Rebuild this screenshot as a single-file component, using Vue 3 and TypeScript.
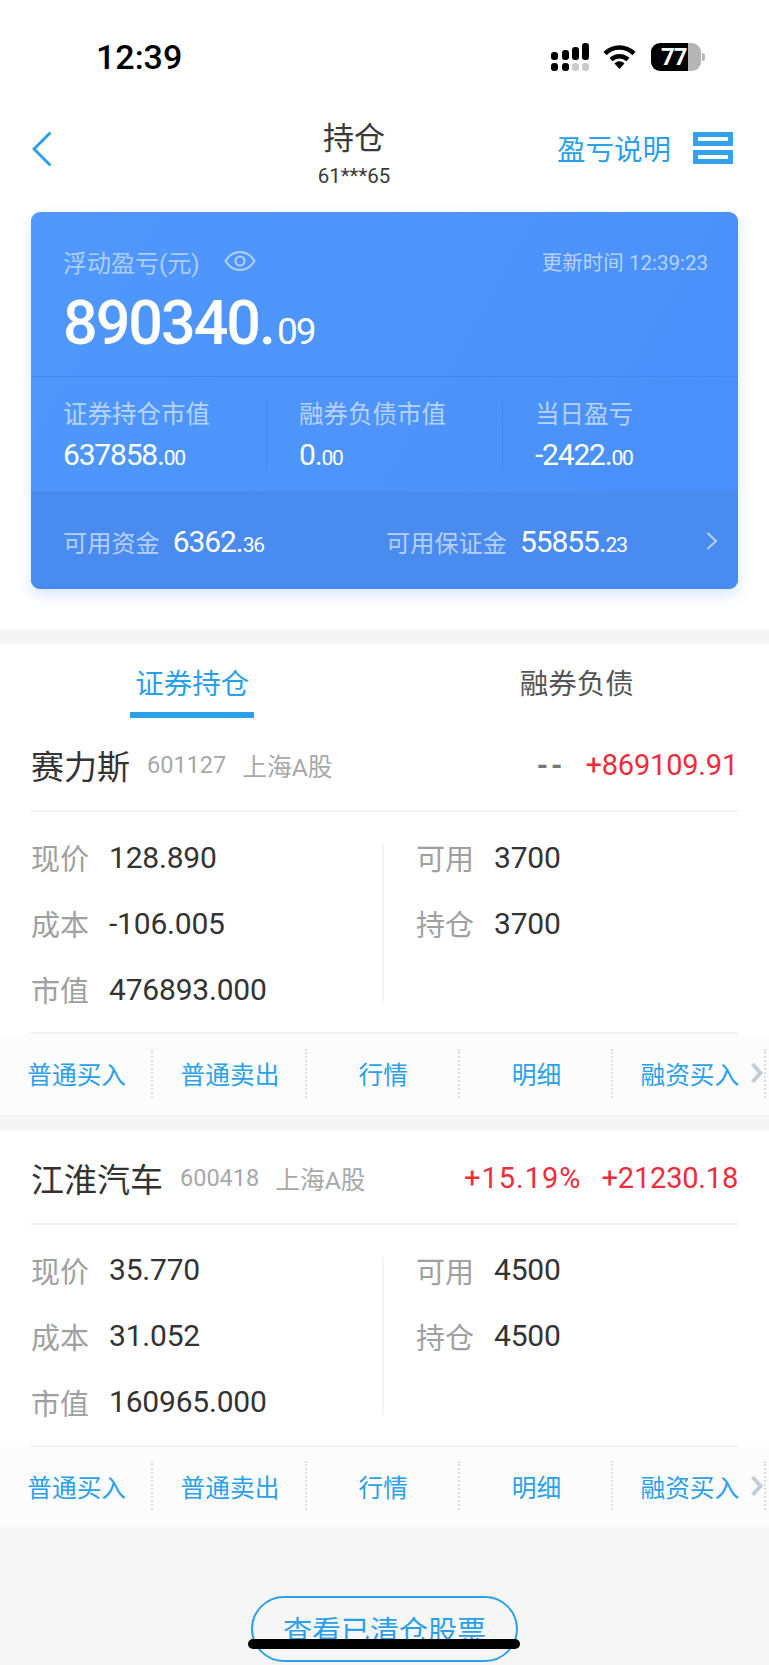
<script setup lang="ts">
interface Stock {
  name: string
  code: string
  market: string
  rate: string
  profit: string
  left: { label: string; value: string }[]
  right: { label: string; value: string }[]
}

const summary = [
  { label: '证券持仓市值', whole: '637858.', dec: '00' },
  { label: '融券负债市值', whole: '0.', dec: '00' },
  { label: '当日盈亏', whole: '-2422.', dec: '00' },
]

const actions = ['普通买入', '普通卖出', '行情', '明细', '融资买入']

const stocks: Stock[] = [
  {
    name: '赛力斯',
    code: '601127',
    market: '上海A股',
    rate: '--',
    profit: '+869109.91',
    left: [
      { label: '现价', value: '128.890' },
      { label: '成本', value: '-106.005' },
      { label: '市值', value: '476893.000' },
    ],
    right: [
      { label: '可用', value: '3700' },
      { label: '持仓', value: '3700' },
    ],
  },
  {
    name: '江淮汽车',
    code: '600418',
    market: '上海A股',
    rate: '+15.19%',
    profit: '+21230.18',
    left: [
      { label: '现价', value: '35.770' },
      { label: '成本', value: '31.052' },
      { label: '市值', value: '160965.000' },
    ],
    right: [
      { label: '可用', value: '4500' },
      { label: '持仓', value: '4500' },
    ],
  },
]
</script>

<template>
  <div class="page">
    <div class="status">
      <span class="status__time">12:39</span>
      <svg class="status__signal" width="38" height="28" viewBox="0 0 38 28">
        <rect x="0" y="9" width="7" height="8" rx="3" fill="#000" />
        <rect x="11" y="7" width="7" height="10" rx="3" fill="#000" />
        <rect x="21" y="4" width="7" height="13" rx="3" fill="#000" />
        <rect x="31" y="0" width="7" height="17" rx="3" fill="#000" />
        <rect x="0" y="20" width="7" height="8" rx="3" fill="#000" />
        <rect x="11" y="20" width="7" height="8" rx="3" fill="#000" />
        <rect x="21" y="20" width="7" height="8" rx="3" fill="#ccc" />
        <rect x="31" y="20" width="7" height="8" rx="3" fill="#ccc" />
      </svg>
      <svg class="status__wifi" width="33" height="24" viewBox="0 0 33 24">
        <path d="M2 8.500C10.500 .500 22.500 .500 31 8.500" fill="none" stroke="#000" stroke-width="4.500" />
        <path d="M8 14.500C13 10 20 10 25 14.500" fill="none" stroke="#000" stroke-width="4.500" />
        <path d="M11.500 18.500C14.500 15.500 18.500 15.500 21.500 18.500L16.500 24Z" fill="#000" />
      </svg>
      <div class="status__battery">
        <span class="status__level">77</span>
      </div>
      <span class="status__cap" />
    </div>

    <header class="nav">
      <svg class="nav__back" width="20" height="36" viewBox="0 0 20 36">
        <path d="M18.500 1.500L2 18L18.500 34.500" fill="none" stroke="#2ba0ea" stroke-width="3" />
      </svg>
      <div class="nav__title">
        <h1>持仓</h1>
        <p>61***65</p>
      </div>
      <div class="nav__right">
        <span class="nav__link">盈亏说明</span>
        <svg width="40" height="32" viewBox="0 0 40 32">
          <rect x="2.500" y="2.500" width="35" height="9" fill="none" stroke="#33a2ea" stroke-width="5" />
          <rect x="2.500" y="20.500" width="35" height="9" fill="none" stroke="#33a2ea" stroke-width="5" />
        </svg>
      </div>
    </header>

    <section class="card">
      <div class="card__top">
        <div class="card__head">
          <span class="card__label">浮动盈亏(元)</span>
          <svg class="card__eye" width="32" height="22" viewBox="0 0 32 22">
            <path d="M1.500 11C9 -1 23 -1 30.500 11C23 23 9 23 1.500 11Z" fill="none" stroke="rgba(255,255,255,.55)" stroke-width="2" />
            <circle cx="16" cy="11" r="4.500" fill="none" stroke="rgba(255,255,255,.55)" stroke-width="2" />
          </svg>
          <span class="card__time">更新时间 12:39:23</span>
        </div>
        <div class="card__total">890340.<small>09</small></div>
      </div>
      <div class="card__summary">
        <div v-for="item in summary" :key="item.label" class="card__cell">
          <span class="card__cell-label">{{ item.label }}</span>
          <span class="card__cell-value">{{ item.whole }}<small>{{ item.dec }}</small></span>
        </div>
      </div>
      <div class="card__funds">
        <span class="card__fund card__fund--first">可用资金<b>6362.<small>36</small></b></span>
        <span class="card__fund">可用保证金<b>55855.<small>23</small></b></span>
        <svg class="card__arrow" width="12" height="18" viewBox="0 0 12 18">
          <path d="M1.500 1L10 9L1.500 17" fill="none" stroke="rgba(255,255,255,.6)" stroke-width="2" />
        </svg>
      </div>
    </section>

    <div class="band" />

    <nav class="tabs">
      <span class="tabs__item tabs__item--on">证券持仓</span>
      <span class="tabs__item">融券负债</span>
    </nav>

    <template v-for="(stock, index) in stocks" :key="stock.code">
      <div v-if="index > 0" class="band band--stock" />
      <article class="stock">
        <div class="stock__head">
          <span class="stock__name">{{ stock.name }}</span>
          <span class="stock__code">{{ stock.code }}</span>
          <span class="stock__market">{{ stock.market }}</span>
          <span class="stock__rate" :class="{ 'stock__rate--none': stock.rate === '--' }">{{ stock.rate }}</span>
          <span class="stock__profit">{{ stock.profit }}</span>
        </div>
        <div class="stock__body">
          <div class="stock__col">
            <div v-for="row in stock.left" :key="row.label" class="stock__row">
              <span class="stock__label">{{ row.label }}</span>
              <span class="stock__value">{{ row.value }}</span>
            </div>
          </div>
          <div class="stock__col stock__col--right">
            <div v-for="row in stock.right" :key="row.label" class="stock__row">
              <span class="stock__label">{{ row.label }}</span>
              <span class="stock__value">{{ row.value }}</span>
            </div>
          </div>
        </div>
        <div class="actions">
          <span v-for="action in actions" :key="action" class="actions__item">
            <span class="actions__text">{{ action }}</span>
          </span>
          <svg class="actions__more" width="14" height="22" viewBox="0 0 14 22">
            <path d="M2.500 2L10.500 11L2.500 20" fill="none" stroke="#c4ccd6" stroke-width="4" />
          </svg>
        </div>
      </article>
    </template>

    <div class="foot">
      <button class="foot__btn" type="button">查看已清仓股票</button>
    </div>

    <div class="home-bar" />
  </div>
</template>

<style>
body {
  background: #fff;
}
</style>

<style scoped>
.page {
  position: relative;
  width: 769px;
  height: 1665px;
  overflow: hidden;
  background: #fff;
  font-family: Roboto, "Noto Sans CJK SC", sans-serif;
}

.status {
  display: flex;
  align-items: flex-start;
  height: 114px;
  padding: 44px 0 0 96px;
  box-sizing: border-box;
}

.status__time {
  width: 455px;
  margin-top: -1px;
  color: #000;
  font-size: 34px;
  font-weight: 500;
  line-height: 28px;
}

.status__signal {
  flex: none;
  margin-top: -1px;
}

.status__wifi {
  flex: none;
  margin: 1px 0 0 14px;
}

.status__battery {
  display: flex;
  align-items: center;
  width: 50px;
  height: 28px;
  margin: -1px 0 0 15px;
  box-sizing: border-box;
  border-radius: 9px;
  background: linear-gradient(90deg, #000 74%, #b5b5b5 74%);
}

.status__level {
  padding-left: 10px;
  color: #fff;
  font-size: 24px;
  font-weight: 700;
  line-height: 28px;
  letter-spacing: -1px;
}

.status__cap {
  width: 3px;
  height: 8px;
  margin: 9px 0 0 1px;
  border-radius: 0 3px 3px 0;
  background: #b5b5b5;
}

.nav {
  display: flex;
  align-items: flex-start;
  height: 98px;
  padding: 0 36px 0 32px;
}

.nav__back {
  flex: none;
  margin-top: 17px;
}

.nav__title {
  width: 76px;
  margin-left: 264px;
  color: #3a3a3a;
  text-align: center;
}

.nav__title h1 {
  margin: 6px 0 0;
  font-size: 31px;
  font-weight: 400;
  line-height: 38px;
}

.nav__title p {
  margin: 6px 0 0;
  font-size: 20.500px;
  line-height: 24px;
  white-space: nowrap;
}

.nav__right {
  display: flex;
  align-items: flex-start;
  gap: 22px;
  margin: 18px 0 0 auto;
  color: #2ba0ea;
  font-size: 28.500px;
  line-height: 32px;
}

.nav__link {
  margin-top: 3px;
}

.card {
  display: flex;
  flex-direction: column;
  width: 707px;
  height: 377px;
  margin: 0 auto 40px;
  overflow: hidden;
  border-radius: 9px;
  background: linear-gradient(120deg, #5098fc, #4a8ffa);
  box-shadow: 0 6px 14px rgba(74, 139, 240, 0.22);
  color: #fff;
}

.card__top {
  height: 165px;
  padding: 0 30px 0 32px;
  box-sizing: border-box;
  border-bottom: 1px solid rgba(50, 110, 210, 0.35);
}

.card__head {
  display: flex;
  align-items: center;
  height: 30px;
  margin-top: 34px;
}

.card__label {
  color: rgba(255, 255, 255, 0.55);
  font-size: 24px;
}

.card__eye {
  margin-left: 24px;
}

.card__time {
  margin-left: auto;
  color: rgba(255, 255, 255, 0.6);
  font-size: 20.500px;
}

.card__total {
  margin-top: 12px;
  font-size: 61px;
  font-weight: 500;
  line-height: 70px;
  letter-spacing: -2px;
}

.card__total small {
  margin-left: 3px;
  font-size: 37px;
  font-weight: 400;
  letter-spacing: -2px;
}

.card__summary {
  display: grid;
  grid-template-columns: 236px 236px 1fr;
  height: 114px;
  padding-top: 22px;
  box-sizing: border-box;
}

.card__cell {
  display: flex;
  flex-direction: column;
  height: 70px;
  padding-left: 32px;
  border-right: 1px solid rgba(50, 110, 210, 0.35);
}

.card__cell:last-child {
  border-right: 0;
}

.card__cell-label {
  color: rgba(255, 255, 255, 0.6);
  font-size: 24.500px;
  line-height: 32px;
}

.card__cell-value {
  margin-top: 6px;
  font-size: 30px;
  line-height: 36px;
  letter-spacing: -1.200px;
}

.card__cell-value small {
  font-size: 21px;
}

.card__funds {
  display: flex;
  align-items: center;
  flex: 1;
  padding: 2px 20px 0 32px;
  background: #4a8bf0;
}

.card__fund {
  color: rgba(255, 255, 255, 0.6);
  font-size: 24.200px;
}

.card__fund--first {
  width: 323px;
}

.card__fund b {
  margin-left: 13px;
  color: #fff;
  font-size: 30px;
  font-weight: 400;
  letter-spacing: -1.100px;
}

.card__fund small {
  font-size: 21px;
}

.card__arrow {
  margin-left: auto;
}

.band {
  height: 15px;
  background: #f5f5f5;
}

.band--stock {
  height: 16px;
}

.tabs {
  display: grid;
  grid-template-columns: 1fr 1fr;
  height: 74px;
  box-sizing: border-box;
}

.tabs__item {
  justify-self: center;
  width: 124px;
  height: 74px;
  box-sizing: border-box;
  padding-top: 21px;
  color: #555;
  font-size: 28.500px;
  line-height: 40px;
  text-align: center;
  white-space: nowrap;
}

.tabs__item--on {
  border-bottom: 6px solid #2ba0ea;
  color: #2ba0ea;
}

.stock {
  background: #fff;
}

.stock__head {
  display: flex;
  align-items: center;
  height: 94px;
  margin: 0 31px;
  padding-top: 2px;
  box-sizing: border-box;
  border-bottom: 2px solid #f1f1f1;
}

.stock__name {
  color: #333;
  font-size: 33px;
}

.stock__code {
  margin-left: 17px;
  color: #a8a8a8;
  font-size: 23.500px;
}

.stock__market {
  margin-left: 16px;
  color: #a8a8a8;
  font-size: 24.700px;
}

.stock__rate {
  margin-left: auto;
  color: #ee2c3c;
  font-size: 29px;
  letter-spacing: 1px;
}

.stock__rate--none {
  color: #777;
  font-weight: 700;
  letter-spacing: 3px;
}

.stock__profit {
  margin-left: 20px;
  color: #ee2c3c;
  font-size: 29px;
  letter-spacing: -0.200px;
}

.stock__body {
  display: flex;
  height: 222px;
  margin: 0 31px;
  padding-top: 32px;
  box-sizing: border-box;
  border-bottom: 2px solid #f1f1f1;
}

.stock__col {
  display: flex;
  flex-direction: column;
  gap: 40px;
  width: 353px;
  height: 158px;
  box-sizing: border-box;
  border-right: 2px solid #f4f4f4;
}

.stock__col--right {
  padding-left: 32px;
  border-right: 0;
}

.stock__row {
  display: flex;
  align-items: center;
  height: 26px;
}

.stock__label {
  width: 78px;
  color: #a0a0a0;
  font-size: 29px;
}

.stock__value {
  color: #333;
  font-size: 30px;
  letter-spacing: -0.200px;
}

.actions {
  position: relative;
  display: flex;
  align-items: center;
  height: 80.500px;
  padding-bottom: 2px;
  box-sizing: border-box;
  background: #fcfcfc;
}

.actions__item {
  display: flex;
  align-items: center;
  justify-content: center;
  flex: none;
  width: 153.300px;
  height: 49px;
  padding-left: 2px;
  box-sizing: border-box;
  border-right: 2px dotted #ddd;
}

.actions__text {
  color: #2ba0ea;
  font-size: 24.700px;
  white-space: nowrap;
}

.actions__more {
  position: absolute;
  top: 28px;
  left: 750px;
}

.foot {
  display: flex;
  justify-content: center;
  height: 138px;
  padding-top: 69px;
  box-sizing: border-box;
  background: #f6f6f6;
}

.foot__btn {
  width: 267px;
  height: 66px;
  padding: 0;
  border: 2px solid #2ba0ea;
  border-radius: 33px;
  background: transparent;
  color: #2ba0ea;
  font-family: inherit;
  font-size: 29px;
}

.home-bar {
  position: absolute;
  left: 248px;
  top: 1639px;
  width: 272px;
  height: 10px;
  border-radius: 5px;
  background: #000;
}
</style>
